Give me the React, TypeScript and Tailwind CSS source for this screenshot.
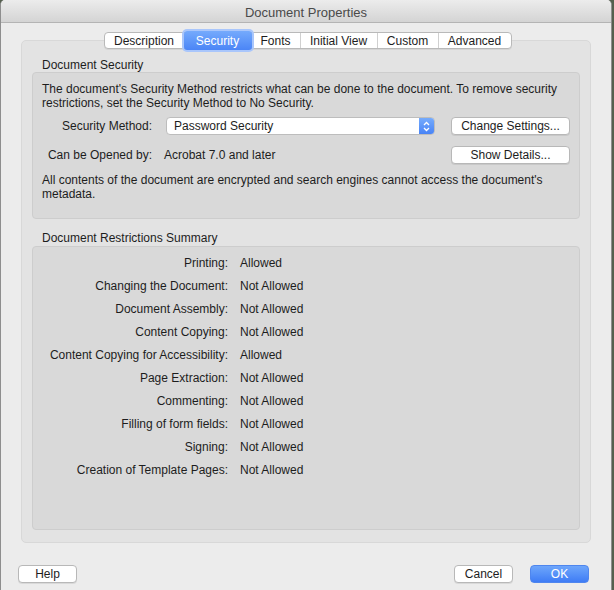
import React from "react";

const restrictions: [string, string][] = [
  ["Printing:", "Allowed"],
  ["Changing the Document:", "Not Allowed"],
  ["Document Assembly:", "Not Allowed"],
  ["Content Copying:", "Not Allowed"],
  ["Content Copying for Accessibility:", "Allowed"],
  ["Page Extraction:", "Not Allowed"],
  ["Commenting:", "Not Allowed"],
  ["Filling of form fields:", "Not Allowed"],
  ["Signing:", "Not Allowed"],
  ["Creation of Template Pages:", "Not Allowed"],
];

const tabs = [
  { label: "Description", w: "w-[79px]" },
  { label: "Security", w: "w-[68px]" },
  { label: "Fonts", w: "w-[48px]" },
  { label: "Initial View", w: "w-[77px]" },
  { label: "Custom", w: "w-[61px]" },
  { label: "Advanced", w: "w-[73px]" },
];

function MacButton({ children, className = "" }: { children: React.ReactNode; className?: string }) {
  return (
    <button
      type="button"
      className={`h-[18px] rounded-[4px] border border-[#b8b8b8] bg-white text-[12px] leading-none text-[#1d1d1d] shadow-[0_1px_0_rgba(0,0,0,0.08)] ${className}`}
    >
      {children}
    </button>
  );
}

export default function App() {
  return (
    <div className="w-[614px] h-[590px] bg-[#55604f] font-['Liberation_Sans',Arial,sans-serif] text-[#1d1d1d]">
      <div className="w-[612px] h-[590px] flex flex-col rounded-t-[5px] overflow-hidden border-l border-r border-[#8e8e8e] bg-[#ececec]">
        {/* title bar */}
        <div className="h-[23px] flex-shrink-0 flex items-center justify-center pt-[3px] bg-gradient-to-b from-[#ececec] to-[#d4d4d4] border-b border-[#b4b4b4]">
          <span className="text-[13px] text-[#4a4a4a]">Document Properties</span>
        </div>

        <div className="flex flex-col px-[20px] pt-[9px]">
          {/* tabs */}
          <div className="relative z-10 flex justify-center pl-[3px] h-[17px]">
            <div className="flex h-[17px] rounded-[4px] border border-[#b9b9b9] bg-white shadow-[0_1px_0_rgba(0,0,0,0.06)]">
              {tabs.map((tb, i) => {
                const sel = tb.label === "Security";
                return sel ? (
                  <div
                    key={tb.label}
                    className={`${tb.w} -my-[2px] flex items-center justify-center rounded-[3px] bg-gradient-to-b from-[#75aafc] to-[#4b85f6] text-white text-[12px] shadow-[0_0_0_2px_#a9c6fb]`}
                  >
                    {tb.label}
                  </div>
                ) : (
                  <div
                    key={tb.label}
                    className={`${tb.w} flex items-center justify-center text-[12px] ${i > 0 && tabs[i - 1].label !== "Security" ? "border-l border-[#d0d0d0]" : ""}`}
                  >
                    {tb.label}
                  </div>
                );
              })}
            </div>
          </div>

          {/* tab box */}
          <div className="-mt-[9px] h-[503px] rounded-[5px] border border-[#d8d8d8] bg-[#e3e3e3] px-[10px] pt-[17px]">
            <div className="text-[12px] leading-[14px] pl-[10px]">Document Security</div>
            <div className="h-[147px] rounded-[4px] border border-[#cdcdcd] bg-[#d9d9d9] px-[9px] pt-[9px] text-[12px]">
              <p className="leading-[14px]">
                The document's Security Method restricts what can be done to the document. To remove security
                restrictions, set the Security Method to No Security.
              </p>
              <div className="mt-[7px] flex items-center h-[18px]">
                <span className="w-[110px] text-right">Security Method:</span>
                <div className="ml-[14px] w-[269px] h-[18px] flex rounded-[4px] border border-[#bdbdbd] bg-white overflow-hidden">
                  <span className="flex-1 pl-[7px] leading-[16px]">Password Security</span>
                  <span className="w-[15px] flex items-center justify-center bg-gradient-to-b from-[#76abfc] to-[#4984f6]">
                    <svg width="7" height="11" viewBox="0 0 7 11" fill="none" stroke="white" strokeWidth="1.3">
                      <path d="M1 4 L3.5 1.5 L6 4" />
                      <path d="M1 7 L3.5 9.5 L6 7" />
                    </svg>
                  </span>
                </div>
                <MacButton className="ml-[16px] w-[119px]">Change Settings...</MacButton>
              </div>
              <div className="mt-[11px] flex items-center h-[18px]">
                <span className="w-[110px] text-right">Can be Opened by:</span>
                <span className="ml-[12px] w-[287px]">Acrobat 7.0 and later</span>
                <MacButton className="w-[119px]">Show Details...</MacButton>
              </div>
              <p className="mt-[9px] leading-[14px]">
                All contents of the document are encrypted and search engines cannot access the document's
                metadata.
              </p>
            </div>

            <div className="mt-[12px] text-[12px] leading-[14px] pl-[10px]">Document Restrictions Summary</div>
            <div className="mt-[1px] h-[284px] rounded-[4px] border border-[#cdcdcd] bg-[#d9d9d9] pt-[4px] text-[12px]">
              {restrictions.map(([k, v]) => (
                <div key={k} className="grid grid-cols-[195px_1fr] gap-x-[12px] h-[23px] items-center">
                  <span className="text-right">{k}</span>
                  <span>{v}</span>
                </div>
              ))}
            </div>
          </div>
        </div>

        {/* footer buttons */}
        <div className="mt-[22px] flex items-center px-[17px] pr-[22px]">
          <MacButton className="w-[59px]">Help</MacButton>
          <div className="flex-1" />
          <MacButton className="w-[59px]">Cancel</MacButton>
          <button
            type="button"
            className="ml-[17px] w-[59px] h-[18px] rounded-[4px] bg-gradient-to-b from-[#6ea6fb] to-[#3f7cf5] text-white text-[12px] leading-none border border-[#4f86ee]"
          >
            OK
          </button>
        </div>
      </div>
    </div>
  );
}
